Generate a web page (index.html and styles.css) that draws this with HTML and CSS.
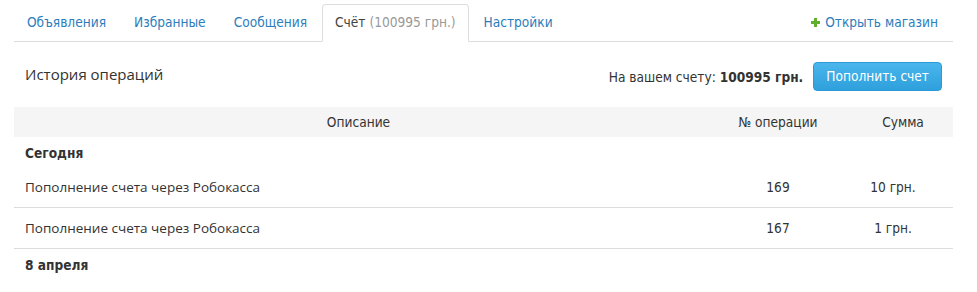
FILE: index.html
```html
<!DOCTYPE html>
<html lang="ru">
<head>
    <meta charset="UTF-8">
    <title>Счёт</title>
    <link rel="stylesheet" href="styles.css">
</head>
<body>
    <div class="w">
        <ul class="tabs">
            <li><a href="#">Объявления</a></li>
            <li><a href="#">Избранные</a></li>
            <li><a href="#">Сообщения</a></li>
            <li class="current"><a href="#">Счёт <span class="sum">(100995 грн.)</span></a></li>
            <li><a href="#">Настройки</a></li>
            <li class="shop"><a href="#"><span class="plus"></span>Открыть магазин</a></li>
        </ul>
        <div class="balance">
            <h2>История операций</h2>
            <div class="account">
                <span>На вашем счету: <b>100995 грн.</b></span>
                <a class="btn" href="#">Пополнить счет</a>
            </div>
        </div>
        <table class="history">
            <thead>
                <tr>
                    <th class="desc">Описание</th>
                    <th class="num">№ операции</th>
                    <th class="amount">Сумма</th>
                </tr>
            </thead>
            <tbody>
                <tr class="day"><td colspan="3">Сегодня</td></tr>
                <tr class="op">
                    <td class="desc">Пополнение счета через Робокасса</td>
                    <td class="num">169</td>
                    <td class="amount">10 грн.</td>
                </tr>
                <tr class="op">
                    <td class="desc">Пополнение счета через Робокасса</td>
                    <td class="num">167</td>
                    <td class="amount">1 грн.</td>
                </tr>
                <tr class="day"><td colspan="3">8 апреля</td></tr>
            </tbody>
        </table>
    </div>
</body>
</html>
```

FILE: styles.css
```css
*{
    margin: 0px;
    padding: 0px;
    text-decoration: none;
    list-style: none;
}
body{
    font-family: "DejaVu Sans Condensed", "DejaVu Sans", sans-serif;
    font-size: 13.6px;
    color: #333;
    background: #fff;
}
.w{
    width: 939px;
    margin-left: 14px;
}
.tabs{
    display: flex;
    align-items: flex-end;
    height: 41px;
    border-bottom: 1px solid #ddd;
}
.tabs li{
    margin-bottom: -1px;
}
.tabs a{
    display: block;
    padding: 9px 12px 10px;
    line-height: 17px;
    margin-right: 2px;
    border: 1px solid transparent;
    border-radius: 4px 4px 0 0;
    color: #2b7dbc;
}
.tabs .current a{
    color: #444;
    background: #fff;
    border-color: #ddd;
    border-bottom-color: #fff;
}
.tabs .current .sum{
    color: #999;
}
.tabs .shop{
    margin-left: auto;
}
.tabs .shop a{
    display: flex;
    align-items: center;
    padding-right: 14px;
    margin-right: 0;
}
.plus{
    position: relative;
    width: 9px;
    height: 9px;
    margin-right: 5px;
}
.plus:before,
.plus:after{
    content: "";
    position: absolute;
    background: #5fae2e;
}
.plus:before{
    left: 3px;
    top: 0;
    width: 3px;
    height: 9px;
}
.plus:after{
    left: 0;
    top: 3px;
    width: 9px;
    height: 3px;
}
.balance{
    display: flex;
    justify-content: space-between;
    align-items: center;
    padding: 20px 11px 16px;
}
.balance h2{
    font-family: "Open Sans", sans-serif;
    font-weight: normal;
    font-size: 15px;
    color: #333;
    padding-bottom: 5px;
}
.account{
    display: flex;
    align-items: center;
}
.btn{
    display: block;
    margin-left: 10px;
    padding: 0 12px;
    height: 29px;
    line-height: 27px;
    box-sizing: border-box;
    border-radius: 4px;
    color: #fff;
    background: linear-gradient(#4ab6ec, #2ea0dc);
    border: 1px solid #2c9ad6;
}
.history{
    width: 100%;
    border-collapse: collapse;
}
.history th{
    font-weight: normal;
    height: 30px;
    background: #f5f5f5;
    padding: 0;
    text-align: center;
}
.history th.desc{
    width: 689px;
}
.history th.num{
    width: 150px;
}
.history .day td{
    font-weight: bold;
    height: 28px;
    padding: 2px 11px 0;
}
.history .op td{
    height: 40px;
    border-bottom: 1px solid #ddd;
    text-align: center;
}
.history .op td.desc{
    text-align: left;
    padding-left: 11px;
    font-family: "Open Sans", sans-serif;
    font-size: 13.5px;
}
.history .op td.amount{
    padding-right: 20px;
}
```
